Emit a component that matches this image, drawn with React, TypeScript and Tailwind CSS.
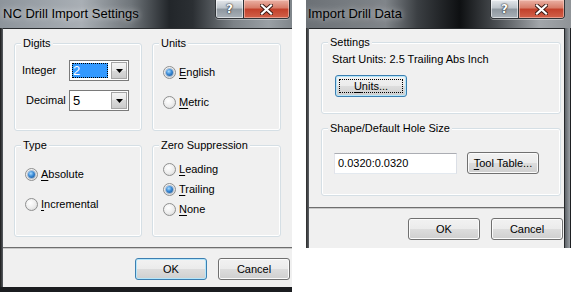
import React from "react";

function CaptionButtons() {
  return (
    <div className="flex h-[19px] overflow-hidden rounded-b-[4px] border border-t-0 border-[#2f3337] shadow-[0_1px_0_rgba(255,255,255,0.35)]">
      <div className="flex w-[28px] items-center justify-center border-r border-[#2f3337] bg-[linear-gradient(#e4e8ec_0%,#bcc3ca_45%,#8e979f_50%,#a9b1b8_100%)] shadow-[inset_0_0_0_1px_rgba(255,255,255,0.55)]">
        <span className="font-['DejaVu_Sans',sans-serif] text-[12px] font-bold leading-none text-white [text-shadow:0_0_2px_#222,0_0_1px_#000]">?</span>
      </div>
      <div className="flex w-[45px] items-center justify-center bg-[linear-gradient(#eab1a4_0%,#d77b67_45%,#c2402a_50%,#d1614a_100%)] shadow-[inset_0_0_0_1px_rgba(255,220,210,0.5)]">
        <svg width="13" height="11" viewBox="0 0 13 11">
          <path d="M2 1.5 L11 9.5 M11 1.5 L2 9.5" stroke="#3a1a14" strokeWidth="4" strokeLinecap="square" />
          <path d="M2 1.5 L11 9.5 M11 1.5 L2 9.5" stroke="#ffffff" strokeWidth="2.2" strokeLinecap="square" />
        </svg>
      </div>
    </div>
  );
}

function Btn({
  children,
  def,
  focus,
  className = "",
}: {
  children: React.ReactNode;
  def?: boolean;
  focus?: boolean;
  className?: string;
}) {
  const border = def || focus ? "border-[#3c7fb1]" : "border-[#707070]";
  const glow = def || focus ? "shadow-[inset_0_0_0_1px_#b4e6fb]" : "shadow-[inset_0_0_0_1px_#fbfbfb]";
  return (
    <div
      className={`relative flex h-[22px] w-[72px] items-center justify-center rounded-[3px] border ${border} ${glow} bg-[linear-gradient(#f2f2f2_0%,#ebebeb_50%,#dddddd_50%,#cfcfcf_100%)] text-[11px] leading-[13px] text-black ${className}`}
    >
      {focus && <div className="absolute inset-[3px] border border-dotted border-black" />}
      <span className="relative">{children}</span>
    </div>
  );
}

function Radio({ checked, children }: { checked?: boolean; children: React.ReactNode }) {
  return (
    <div className="flex h-[13px] items-center gap-[3px] text-[11px] leading-[13px]">
      <span className="flex h-[13px] w-[13px] items-center justify-center rounded-full border border-[#8e8f8f] bg-[radial-gradient(circle_at_40%_35%,#ffffff_0%,#ececec_55%,#cfd0d0_100%)]">
        {checked && (
          <span className="h-[7px] w-[7px] rounded-full bg-[radial-gradient(circle_at_40%_35%,#a8dcff_0%,#3a8ad6_45%,#0f4a8a_100%)] shadow-[0_0_0_1px_rgba(40,90,150,0.35)]" />
        )}
      </span>
      <span>{children}</span>
    </div>
  );
}

function Group({
  label,
  className = "",
  children,
}: {
  label: string;
  className?: string;
  children?: React.ReactNode;
}) {
  return (
    <div className={`relative rounded-[3px] border border-[#d5dfe5] shadow-[inset_0_0_0_1px_#ffffff] ${className}`}>
      <span className="absolute left-[6px] top-[-7px] bg-[#f0f0f0] px-[2px] text-[11px] leading-[13px] text-black">
        {label}
      </span>
      {children}
    </div>
  );
}

function Arrow() {
  return (
    <svg width="7" height="4" viewBox="0 0 7 4">
      <path d="M0 0 H7 L3.5 4 Z" fill="#000" />
    </svg>
  );
}

function Combo({ value, selected }: { value: string; selected?: boolean }) {
  return (
    <div className="flex h-[21px] w-[60px] border border-[#7a7a7a] bg-white">
      <div className="flex-1 p-[2px]">
        {selected ? (
          <div className="h-full bg-[#3399ff] pl-[1px] text-[13px] leading-[15px] text-white outline-1 outline-dotted outline-[#000] -outline-offset-1">
            {value}
          </div>
        ) : (
          <div className="h-full pl-[1px] text-[13px] leading-[15px] text-black">{value}</div>
        )}
      </div>
      <div className="m-[1px] flex w-[16px] items-center justify-center border border-[#a5a5a5] bg-[linear-gradient(#f4f4f4_0%,#e8e8e8_50%,#d9d9d9_50%,#cbcbcb_100%)]">
        <Arrow />
      </div>
    </div>
  );
}

function U({ children }: { children: React.ReactNode }) {
  return <span className="underline decoration-1 underline-offset-[2px]">{children}</span>;
}

export default function App() {
  return (
    <div className="flex h-[292px] w-[571px] items-start gap-[14px] bg-white font-['Liberation_Sans',Arial,sans-serif] text-black">
      {/* Left dialog */}
      <div className="flex h-[292px] w-[292px] flex-col bg-[#1e2023]">
        <div className="flex h-[28px] items-start bg-[linear-gradient(90deg,#8d949b_0%,#a9afb5_28%,#6f757a_45%,#22262a_58%,#2b2f33_66%,#7c8287_80%,#9aa0a5_92%,#80868b_100%)]">
          <span className="ml-[3px] mt-[6px] text-[13px] leading-[16px] text-black [text-shadow:0_0_6px_rgba(255,255,255,0.8)]">
            NC Drill Import Settings
          </span>
          <div className="ml-auto mr-[2px]">
            <CaptionButtons />
          </div>
        </div>
        <div className="flex flex-1">
          <div className="w-[3px] bg-[linear-gradient(90deg,#1a1a1a,#5a5f64)]" />
          <div className="flex flex-1 flex-col border-t border-[#2a2d30] bg-[#f0f0f0]">
            <div className="flex gap-[10px] pl-[11px] pt-[14px]">
              <div className="flex w-[128px] flex-col gap-[14px]">
                <Group label="Digits" className="h-[88px]">
                  <div className="flex flex-col gap-[9px] pl-[7px] pt-[16px]">
                    <div className="flex items-center text-[11px] leading-[13px]">
                      <span className="w-[47px]">Integer</span>
                      <Combo value="2" selected />
                    </div>
                    <div className="flex items-center text-[11px] leading-[13px]">
                      <span className="w-[47px] pl-[4px]">Decimal</span>
                      <Combo value="5" />
                    </div>
                  </div>
                </Group>
                <Group label="Type" className="h-[92px]">
                  <div className="flex flex-col gap-[17px] pl-[10px] pt-[22px]">
                    <Radio checked>
                      <U>A</U>bsolute
                    </Radio>
                    <Radio>
                      <U>I</U>ncremental
                    </Radio>
                  </div>
                </Group>
              </div>
              <div className="flex w-[129px] flex-col gap-[14px]">
                <Group label="Units" className="h-[88px]">
                  <div className="flex flex-col gap-[17px] pl-[10px] pt-[22px]">
                    <Radio checked>
                      <U>E</U>nglish
                    </Radio>
                    <Radio>
                      <U>M</U>etric
                    </Radio>
                  </div>
                </Group>
                <Group label="Zero Suppression" className="h-[92px]">
                  <div className="flex flex-col gap-[7px] pl-[10px] pt-[17px]">
                    <Radio>
                      <U>L</U>eading
                    </Radio>
                    <Radio checked>
                      <U>T</U>railing
                    </Radio>
                    <Radio>
                      <U>N</U>one
                    </Radio>
                  </div>
                </Group>
              </div>
            </div>
            <div className="mt-[10px] h-[2px] border-t border-[#6e6e6e] bg-[#c9c9c9]" />
            <div className="flex justify-end gap-[11px] pr-[2px] pt-[9px]">
              <Btn def>OK</Btn>
              <Btn>Cancel</Btn>
            </div>
          </div>
        </div>
        <div className="h-[5px] bg-[#1b1d20]" />
      </div>

      {/* Right dialog */}
      <div className="flex h-[248px] w-[265px] flex-col bg-[#1e2023]">
        <div className="flex h-[28px] items-start bg-[linear-gradient(90deg,#6c7176_0%,#80858a_30%,#3b3f43_42%,#0e1012_58%,#4a4e52_72%,#a2a6aa_88%,#8f9397_100%)]">
          <span className="ml-[2px] mt-[6px] text-[13px] leading-[16px] text-black [text-shadow:0_0_6px_rgba(255,255,255,0.7)]">
            Import Drill Data
          </span>
          <div className="ml-auto mr-[6px]">
            <CaptionButtons />
          </div>
        </div>
        <div className="flex flex-1">
          <div className="w-[3px] bg-[linear-gradient(90deg,#2a2a2a,#5d6166)]" />
          <div className="flex w-[256px] flex-col border-r border-t border-[#25282b] bg-[#f0f0f0]">
            <div className="flex flex-col gap-[14px] pl-[12px] pr-[3px] pt-[13px]">
              <Group label="Settings" className="h-[72px]">
                <div className="pl-[10px] pt-[10px] text-[11px] leading-[13px]">
                  Start Units: 2.5 Trailing Abs Inch
                </div>
                <div className="pl-[13px] pt-[9px]">
                  <Btn focus>
                    <U>U</U>nits...
                  </Btn>
                </div>
              </Group>
              <Group label="Shape/Default Hole Size" className="h-[68px]">
                <div className="flex items-center gap-[10px] pl-[12px] pt-[23px]">
                  <div className="flex h-[21px] w-[123px] items-center border border-[#abadb3] border-b-[#e3e9ef] border-l-[#e2e3ea] border-r-[#dbdfe6] bg-white pl-[3px] text-[11px] leading-[13px]">
                    0.0320:0.0320
                  </div>
                  <Btn>
                    <U>T</U>ool Table...
                  </Btn>
                </div>
              </Group>
            </div>
            <div className="mt-[11px] h-[2px] border-t border-[#6e6e6e] bg-[#c9c9c9]" />
            <div className="flex justify-end gap-[11px] pr-[1px] pt-[9px]">
              <Btn>OK</Btn>
              <Btn>Cancel</Btn>
            </div>
          </div>
          <div className="w-[5px] bg-[linear-gradient(90deg,#5e6368,#9ba0a5)]" />
        </div>
      </div>
    </div>
  );
}
